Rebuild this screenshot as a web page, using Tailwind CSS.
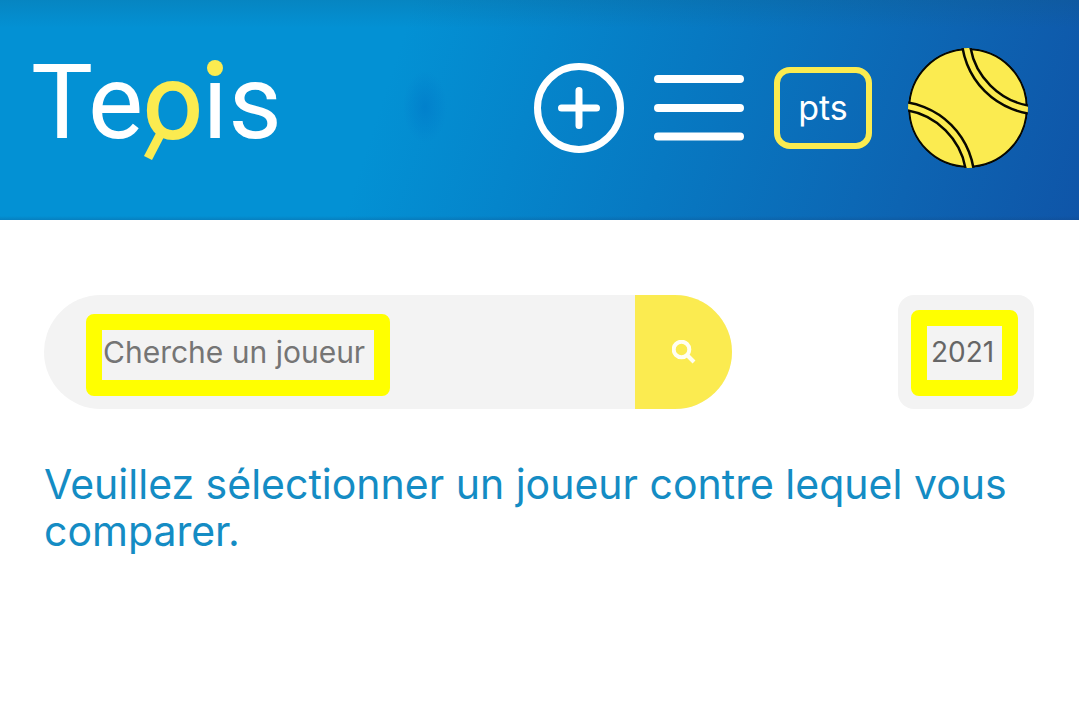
<!DOCTYPE html>
<html lang="fr">
<head>
<meta charset="utf-8">
<meta name="viewport" content="width=device-width, initial-scale=1">
<title>Tennis</title>
<script src="https://cdn.jsdelivr.net/npm/@tailwindcss/browser@4"></script>
</head>
<body class="min-h-screen bg-white font-['Inter',sans-serif]">
<header class="flex h-[220px] items-center justify-between bg-[linear-gradient(to_bottom,rgba(20,80,110,0.18),rgba(20,80,110,0)_28px,rgba(20,80,110,0)_216px,rgba(20,60,110,0.2)),radial-gradient(ellipse_22px_36px_at_425px_107px,rgba(0,120,200,0.6),rgba(0,120,200,0)),linear-gradient(108deg,#0391d4_36%,#0779c2_62%,#0d64b2_84%,#0f55a8)] pr-[51px] pb-1 pl-[30px]">
  <a href="#" aria-label="Accueil">
    <svg class="block h-[160px] w-[266px] overflow-visible" viewBox="0 -20 266 160">
      <text x="1" y="90" font-family="Roboto, sans-serif" font-size="104" fill="#fff">Te<tspan fill="#fbeb50" stroke="#fbeb50" stroke-width="2">o</tspan>ıs</text>
      <path d="M131 85L118 110" stroke="#fbeb50" stroke-width="9" fill="none"/>
      <circle cx="185" cy="20" r="8" fill="#fbeb50"/>
    </svg>
  </a>
  <nav class="flex items-center">
    <button type="button" aria-label="Ajouter" class="mr-[30px]">
      <svg class="block size-[90px]" viewBox="0 0 90 90" fill="none" stroke="#fff" stroke-width="7" stroke-linecap="round"><circle cx="45" cy="45" r="41.5"/><path d="M45 27.500V62.500M27.500 45H62.500"/></svg>
    </button>
    <button type="button" aria-label="Menu" class="mr-[30px]">
      <svg class="block size-[90px]" viewBox="0 0 90 90" fill="none" stroke="#fff" stroke-width="8" stroke-linecap="round"><path d="M4 16H86M4 45H86M4 73.500H86"/></svg>
    </button>
    <button type="button" class="mr-9 h-[82px] w-[98px] rounded-2xl border-6 border-[#fbeb50] text-[34px] leading-10 text-white">pts</button>
    <button type="button" aria-label="Profil">
      <svg class="block size-[120px]" viewBox="0 0 120 120" fill="none">
        <defs><clipPath id="ball"><circle cx="60" cy="60" r="60"/></clipPath></defs>
        <g clip-path="url(#ball)">
          <circle cx="60" cy="60" r="58.800" fill="#fbeb50" stroke="#080800" stroke-width="2"/>
          <g stroke="#080800" stroke-width="10.500"><circle cx="-13" cy="133" r="75.500"/><circle cx="133" cy="-13" r="75.500"/></g>
          <g stroke="#fbeb50" stroke-width="5.500"><circle cx="-13" cy="133" r="75.500"/><circle cx="133" cy="-13" r="75.500"/></g>
        </g>
      </svg>
    </button>
  </nav>
</header>
<main class="pt-[75px] pr-[45px] pl-11">
  <div class="flex items-center justify-between">
    <form class="relative flex h-[114px] w-[688px] overflow-hidden rounded-full bg-[#f3f3f3]" onsubmit="return false">
      <input type="text" aria-label="Cherche un joueur" placeholder="Cherche un joueur" class="min-w-0 flex-1 bg-transparent pl-[59px] text-[30px] text-[#757575] outline-none placeholder:text-[#757575]">
      <button type="submit" aria-label="Chercher" class="flex w-[97px] items-center justify-center bg-[#fbeb50]">
        <svg class="size-6" viewBox="0 0 24 24" fill="none" stroke="#fffef2" stroke-width="4"><circle cx="9.500" cy="9.500" r="7.800"/><path d="M15 15L22 22"/></svg>
      </button>
      <span class="pointer-events-none absolute top-[19px] left-[42px] h-[82px] w-[304px] rounded-lg border-16 border-[#ffff00]"></span>
    </form>
    <div class="relative h-[114px] w-[136px] rounded-2xl bg-[#f3f3f3]">
      <select aria-label="Année" class="size-full appearance-none bg-transparent pl-[33px] text-[28px] text-[#666] outline-none"><option>2021</option></select>
      <span class="pointer-events-none absolute top-[15px] left-[13px] h-[86px] w-[107px] rounded-lg border-16 border-[#ffff00]"></span>
    </div>
  </div>
  <p class="mt-[52px] text-[41px] leading-[47px] text-[#148cc4]">Veuillez sélectionner un joueur contre lequel vous comparer.</p>
</main>
</body>
</html>
